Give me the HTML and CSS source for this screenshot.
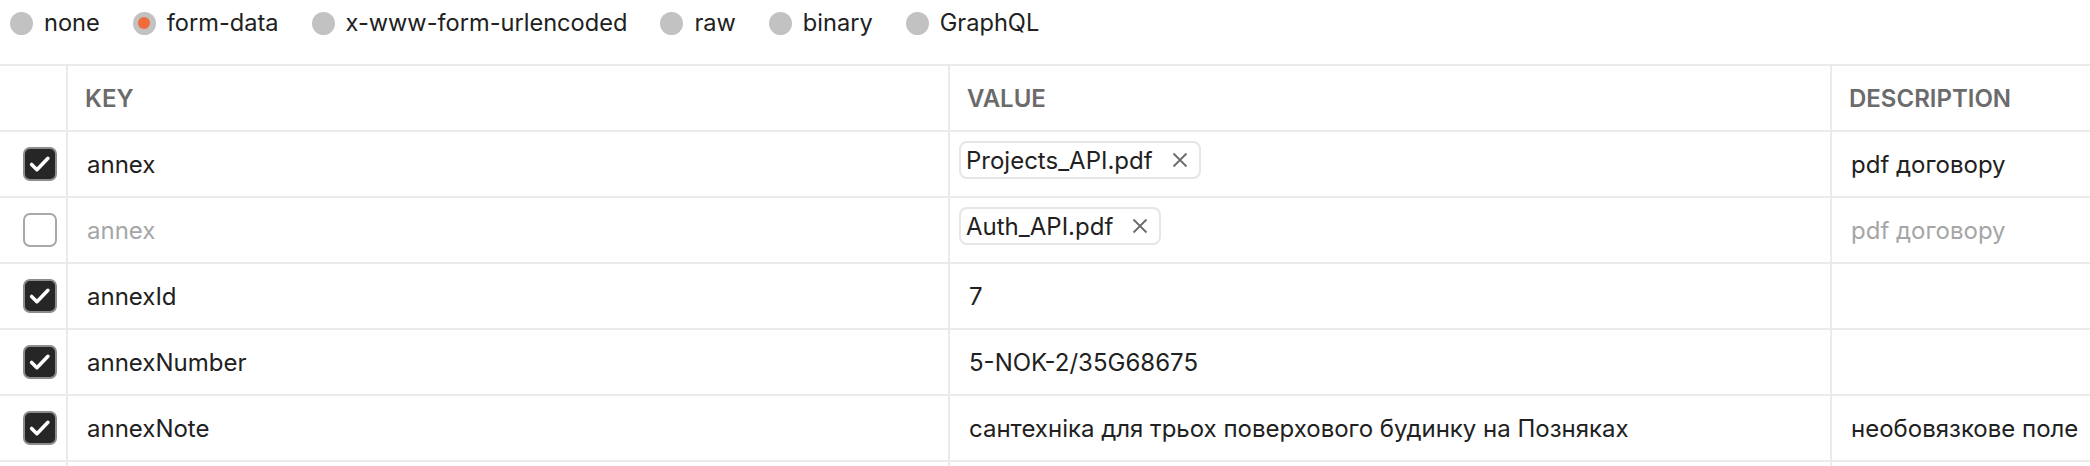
FILE: index.html
```html
<!DOCTYPE html>
<html lang="uk">
<head>
<meta charset="utf-8">
<title>Body form-data</title>
<link rel="stylesheet" href="styles.css">
</head>
<body>
<div class="body-types">
  <label class="radio"><span class="dot"></span><span class="rlabel">none</span></label>
  <label class="radio selected"><span class="dot"></span><span class="rlabel">form-data</span></label>
  <label class="radio"><span class="dot"></span><span class="rlabel">x-www-form-urlencoded</span></label>
  <label class="radio"><span class="dot"></span><span class="rlabel">raw</span></label>
  <label class="radio"><span class="dot"></span><span class="rlabel">binary</span></label>
  <label class="radio"><span class="dot"></span><span class="rlabel">GraphQL</span></label>
</div>

<div class="kv-table">
  <div class="row head">
    <div class="cell c-check"></div>
    <div class="cell">KEY</div>
    <div class="cell">VALUE</div>
    <div class="cell last">DESCRIPTION</div>
  </div>

  <div class="row">
    <div class="cell c-check"><span class="cb on"><svg viewBox="0 0 34 34"><path d="M7.5 17.5 L13.5 23.5 L26 10.5"/></svg></span></div>
    <div class="cell">annex</div>
    <div class="cell c-file"><span class="chip">Projects_API.pdf<svg class="x" viewBox="0 0 16 16"><path d="M1.5 1.5 L14.5 14.5 M14.5 1.5 L1.5 14.5"/></svg></span></div>
    <div class="cell last">pdf договору</div>
  </div>

  <div class="row off">
    <div class="cell c-check"><span class="cb"></span></div>
    <div class="cell">annex</div>
    <div class="cell c-file"><span class="chip">Auth_API.pdf<svg class="x" viewBox="0 0 16 16"><path d="M1.5 1.5 L14.5 14.5 M14.5 1.5 L1.5 14.5"/></svg></span></div>
    <div class="cell last">pdf договору</div>
  </div>

  <div class="row">
    <div class="cell c-check"><span class="cb on"><svg viewBox="0 0 34 34"><path d="M7.5 17.5 L13.5 23.5 L26 10.5"/></svg></span></div>
    <div class="cell">annexId</div>
    <div class="cell">7</div>
    <div class="cell last"></div>
  </div>

  <div class="row">
    <div class="cell c-check"><span class="cb on"><svg viewBox="0 0 34 34"><path d="M7.5 17.5 L13.5 23.5 L26 10.5"/></svg></span></div>
    <div class="cell">annexNumber</div>
    <div class="cell">5-NOK-2/35G68675</div>
    <div class="cell last"></div>
  </div>

  <div class="row">
    <div class="cell c-check"><span class="cb on"><svg viewBox="0 0 34 34"><path d="M7.5 17.5 L13.5 23.5 L26 10.5"/></svg></span></div>
    <div class="cell">annexNote</div>
    <div class="cell">сантехніка для трьох поверхового будинку на Позняках</div>
    <div class="cell last">необовязкове поле</div>
  </div>

  <div class="row">
    <div class="cell c-check"></div>
    <div class="cell"></div>
    <div class="cell"></div>
    <div class="cell last"></div>
  </div>
</div>
</body>
</html>
```

FILE: styles.css
```css
html, body {
  margin: 0;
  padding: 0;
  background: #ffffff;
}

body {
  width: 2090px;
  height: 466px;
  overflow: hidden;
  font-family: Inter, "Noto Sans", "Liberation Sans", sans-serif;
  font-size: 24px;
  color: #212121;
}

.body-types {
  display: flex;
  align-items: center;
  height: 46px;
  padding-left: 10px;
  margin-bottom: 18px;
  gap: 33px;
  font-size: 23.6px;
}

.radio {
  display: flex;
  align-items: center;
  gap: 11px;
  line-height: 46px;
}

.dot {
  width: 23px;
  height: 23px;
  border-radius: 50%;
  background: #c2c2c2;
  display: flex;
  align-items: center;
  justify-content: center;
}

.radio.selected .dot::after {
  content: "";
  width: 12px;
  height: 12px;
  border-radius: 50%;
  background: #f26b3a;
}

.kv-table {
  border-top: 2px solid #ebebeb;
}

.row {
  display: grid;
  grid-template-columns: 68px 882px 882px 1fr;
  height: 66px;
  border-bottom: 2px solid #ebebeb;
  box-sizing: border-box;
}

.cell {
  box-sizing: border-box;
  border-right: 2px solid #ebebeb;
  padding-left: 19px;
  display: flex;
  align-items: center;
  white-space: nowrap;
  overflow: hidden;
}

.cell.last {
  border-right: none;
}

.head .cell {
  padding-left: 17px;
  font-weight: 600;
  color: #6b6b6b;
}

.off .cell {
  color: #a6a6a6;
}

.c-check {
  padding-left: 23px;
}

.cb {
  width: 34px;
  height: 34px;
  box-sizing: border-box;
  border: 2px solid #a8a8a8;
  border-radius: 7px;
  background: #ffffff;
  display: block;
}

.cb.on {
  background: #262626;
  border-color: #8c8c8c;
}

.cb svg {
  display: block;
  width: 30px;
  height: 30px;
  margin: 0;
}

.cb svg path {
  fill: none;
  stroke: #ffffff;
  stroke-width: 4;
  stroke-linecap: round;
  stroke-linejoin: round;
}

.c-file {
  padding-left: 9px;
  align-items: flex-start;
  padding-top: 9px;
}

.chip {
  display: inline-flex;
  align-items: center;
  height: 38px;
  box-sizing: border-box;
  border: 2px solid #e6e6e6;
  border-radius: 8px;
  padding: 0 11px 0 5px;
  color: #212121;
}

.x {
  width: 16px;
  height: 16px;
  margin-left: 19px;
}

.x path {
  fill: none;
  stroke: #6b6b6b;
  stroke-width: 1.8;
}
```
